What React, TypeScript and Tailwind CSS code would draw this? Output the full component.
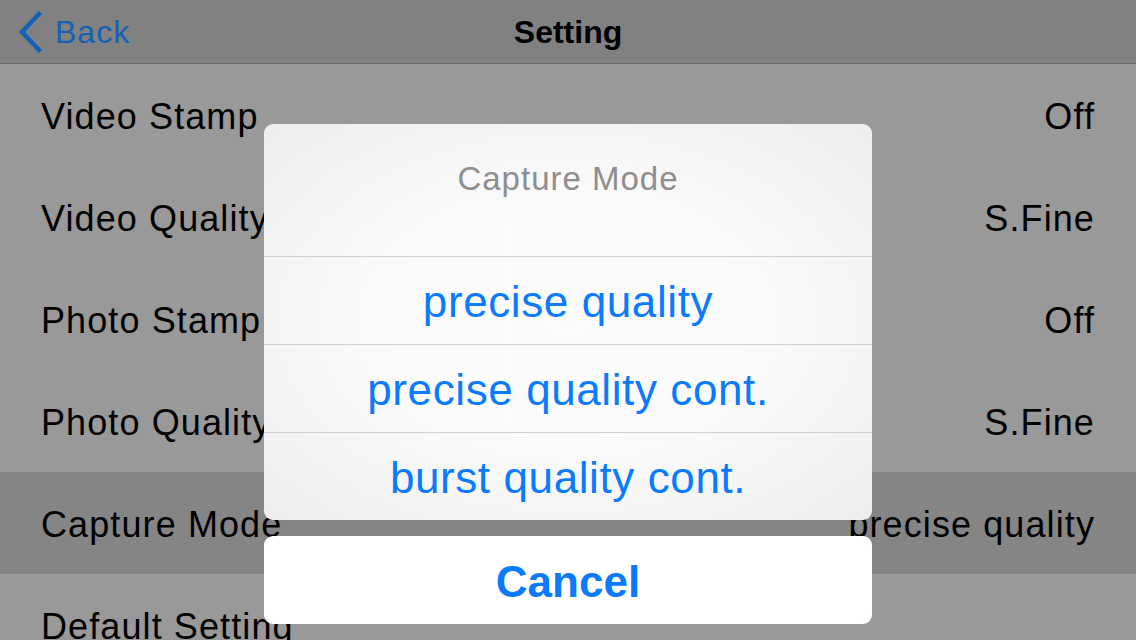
import React from "react";

const rows: { label: string; value: string; active?: boolean }[] = [
  { label: "Video Stamp", value: "Off" },
  { label: "Video Quality", value: "S.Fine" },
  { label: "Photo Stamp", value: "Off" },
  { label: "Photo Quality", value: "S.Fine" },
  { label: "Capture Mode", value: "precise quality", active: true },
  { label: "Default Setting", value: "" },
];

export default function App() {
  return (
    <div
      className="relative w-[1136px] h-[640px] overflow-hidden bg-[#999999]"
      style={{ fontFamily: '"Liberation Sans", Arial, sans-serif' }}
    >
      <div className="h-[64px] bg-[#818181] border-b border-[#6d6d6d] flex items-center relative">
        <div className="flex items-center pl-[17px] gap-[12px]">
          <svg width="26" height="42" viewBox="0 0 26 42">
            <path d="M22 3 L5 21 L22 39" fill="none" stroke="#1660b6" strokeWidth="4.5" strokeLinecap="square" />
          </svg>
          <span className="text-[32px] tracking-[1px] text-[#1660b6] leading-none">Back</span>
        </div>
        <div className="absolute inset-0 flex items-center justify-center pointer-events-none">
          <span className="text-[32px] font-bold text-black leading-none">Setting</span>
        </div>
      </div>
      <div className="flex flex-col">
        {rows.map((r) => (
          <div
            key={r.label}
            className={`h-[102px] flex items-center justify-between pl-[41px] pr-[41px] pt-[4px] text-[36px] tracking-[1.1px] text-black ${r.active ? "bg-[#858585]" : ""}`}
          >
            <span>{r.label}</span>
            <span>{r.value}</span>
          </div>
        ))}
      </div>

      <div className="absolute left-[264px] top-[124px] w-[608px] flex flex-col gap-[16px]">
        <div className="rounded-[9px] overflow-hidden bg-radial from-[#fbfbfb] from-40% to-[#eeeeee] flex flex-col">
          <div className="h-[132px] flex justify-center pt-[38px]">
            <span className="text-[33px] tracking-[1px] text-[#8e8e8e] leading-none h-fit">Capture Mode</span>
          </div>
          {["precise quality", "precise quality cont.", "burst quality cont."].map((t) => (
            <div
              key={t}
              className="h-[88px] border-t border-[#cfcfcf] flex items-center justify-center pt-[3px] text-[44px] tracking-[0.6px] text-[#0a7aff]"
            >
              {t}
            </div>
          ))}
        </div>
        <div className="h-[88px] rounded-[9px] bg-white flex items-center justify-center pt-[3px] text-[44px] font-bold text-[#0a7aff]">
          Cancel
        </div>
      </div>
    </div>
  );
}
